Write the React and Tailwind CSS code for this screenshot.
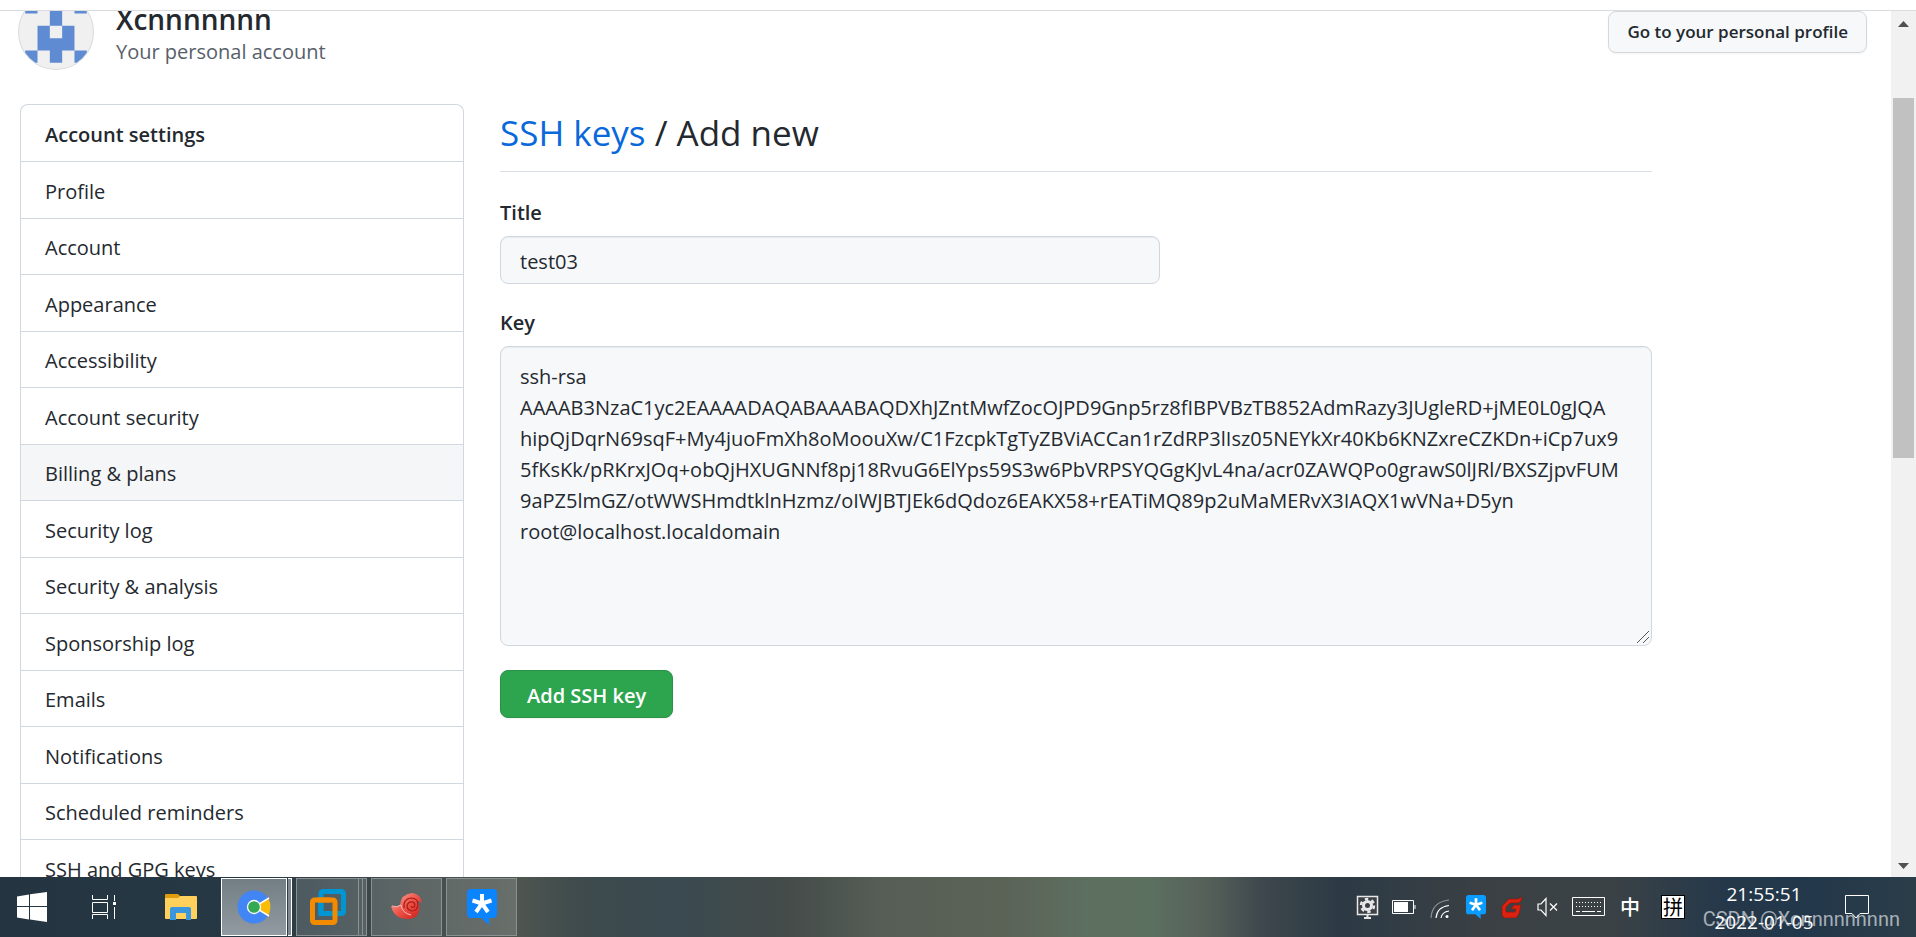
import React, { useState } from "react";

const menuItems = [
  "Profile",
  "Account",
  "Appearance",
  "Accessibility",
  "Account security",
  "Billing & plans",
  "Security log",
  "Security & analysis",
  "Sponsorship log",
  "Emails",
  "Notifications",
  "Scheduled reminders",
  "SSH and GPG keys",
];

const defaultKey = [
  "ssh-rsa",
  "AAAAB3NzaC1yc2EAAAADAQABAAABAQDXhJZntMwfZocOJPD9Gnp5rz8fIBPVBzTB852AdmRazy3JUgleRD+jME0L0gJQA",
  "hipQjDqrN69sqF+My4juoFmXh8oMoouXw/C1FzcpkTgTyZBViACCan1rZdRP3lIsz05NEYkXr40Kb6KNZxreCZKDn+iCp7ux9",
  "5fKsKk/pRKrxJOq+obQjHXUGNNf8pj18RvuG6ElYps59S3w6PbVRPSYQGgKJvL4na/acr0ZAWQPo0grawS0lJRl/BXSZjpvFUM",
  "9aPZ5lmGZ/otWWSHmdtklnHzmz/oIWJBTJEk6dQdoz6EAKX58+rEATiMQ89p2uMaMERvX3IAQX1wVNa+D5yn",
  "root@localhost.localdomain",
].join("\n");

function Avatar() {
  return (
    <svg className="h-[76px] w-[76px] shrink-0" viewBox="0 0 74 74" aria-label="Avatar">
      <clipPath id="avatar">
        <circle cx="37" cy="37" r="36" />
      </clipPath>
      <circle cx="37" cy="37" r="36.5" fill="#f0f0f0" stroke="#d9dbdd" />
      <path
        clipPath="url(#avatar)"
        fill="#5f8bd3"
        d="M7 7h12v12H7zM31 7h12v24H31zM55 7h12v12H55zM19 31h12v12h12V31h12v24H43v12H31V55H19zM7 55h12v12H7zM55 55h12v12H55z"
      />
    </svg>
  );
}

function Header() {
  return (
    <header className="-mt-[17px] flex items-center pr-6 pl-[18px]">
      <Avatar />
      <div className="ml-[22px] pt-[3px]">
        <h2 className="text-[28px] leading-9 font-semibold">Xcnnnnnnn</h2>
        <p className="text-xl leading-[30px] text-[#57606a]">Your personal account</p>
      </div>
      <button className="mt-[17px] ml-auto h-[42px] self-start rounded-lg border border-[#d5d8da] bg-[#f6f8fa] px-[18px] text-[17px] font-semibold shadow-xs">
        Go to your personal profile
      </button>
    </header>
  );
}

function Sidebar() {
  return (
    <nav className="w-[444px] shrink-0 rounded-t-lg border border-b-0 border-[#d0d7de] text-xl">
      <h3 className="flex h-[57px] items-center border-b border-[#d0d7de] px-6 pt-[3px] font-semibold">
        Account settings
      </h3>
      <ul>
        {menuItems.map((item) => (
          <li key={item} className="border-b border-[#d0d7de] odd:h-[57px] even:h-14">
            <a
              href="#"
              className={`flex h-full items-center px-6 pt-[3px] ${item === "Billing & plans" ? "bg-[#f5f6f8]" : ""}`}
            >
              {item}
            </a>
          </li>
        ))}
      </ul>
    </nav>
  );
}

function KeyForm() {
  const [title, setTitle] = useState("test03");
  const [key, setKey] = useState(defaultKey);

  return (
    <main className="max-w-[1152px] min-w-0 flex-1">
      <h1 className="border-b border-[#d8dee4] pb-[9px] text-[35px] leading-[58px]">
        <a href="#" className="text-[#0969da]">SSH keys</a> / Add new
      </h1>
      <form onSubmit={(e) => e.preventDefault()}>
        <label htmlFor="title" className="mt-[26px] mb-2 block text-xl leading-[30px] font-semibold">
          Title
        </label>
        <input
          id="title"
          value={title}
          onChange={(e) => setTitle(e.target.value)}
          className="block h-12 w-full max-w-[660px] rounded-lg border border-[#d0d7de] bg-[#f6f8fa] px-[19px] pt-[3px] text-xl shadow-[inset_0_1px_1px_#e8ebee]"
        />
        <label htmlFor="key" className="mt-6 mb-2 block text-xl leading-[30px] font-semibold">
          Key
        </label>
        <div className="relative">
          <textarea
            id="key"
            value={key}
            onChange={(e) => setKey(e.target.value)}
            spellCheck={false}
            className="block h-[300px] w-full resize-none overflow-hidden rounded-lg border border-[#d0d7de] bg-[#f6f8fa] py-[14px] pr-3 pl-[19px] text-xl leading-[31px] whitespace-pre shadow-[inset_0_1px_1px_#e8ebee]"
          />
          <svg className="pointer-events-none absolute right-[3px] bottom-[3px] h-3 w-3" viewBox="0 0 12 12">
            <path d="M0 12L12 0M6 12l6-6" stroke="#555" />
          </svg>
        </div>
        <button className="mt-6 h-12 rounded-lg border border-[#2a9147] bg-[#2da44e] px-[26px] pt-[3px] text-xl font-semibold text-white shadow-xs">
          Add SSH key
        </button>
      </form>
    </main>
  );
}

function Scrollbar() {
  return (
    <div className="flex w-[25px] shrink-0 flex-col items-center bg-[#f1f1f1]">
      <svg className="h-[87px] w-[25px]" viewBox="0 0 25 87">
        <path d="M7 16l5.5-6 5.5 6z" fill="#505050" />
      </svg>
      <div className="h-[360px] w-[21px] bg-[#c1c1c1]" />
      <svg className="mt-auto h-6 w-[25px]" viewBox="0 0 25 24">
        <path d="M7 10h11l-5.500 6z" fill="#505050" />
      </svg>
    </div>
  );
}

function WindowsIcon() {
  return (
    <svg className="h-[30px] w-[30px]" viewBox="0 0 30 30" fill="#fff">
      <path d="M0 4.500L12 2.500V14H0zM13 2.300L30 0v14H13zM0 15h12v12.500L0 25.500zM13 15h17v15l-17-2.400z" />
    </svg>
  );
}

function TaskViewIcon() {
  return (
    <svg className="h-6 w-6" viewBox="0 0 24 24" fill="none" stroke="#fff">
      <path d="M.5 0v4.500h15V0M.5 7.500h15v10H.5zM.5 24v-4.500h15V24M22.500 0v6M22.500 12v12" />
      <path d="M21 7h3v3h-3z" fill="#fff" stroke="none" />
    </svg>
  );
}

function FolderIcon() {
  return (
    <svg className="h-7 w-8" viewBox="0 0 32 28">
      <path d="M0 2q0-1 1-1h12l2 2-2 4H0z" fill="#e19c0b" />
      <path d="M0 5h13l2-2h16q1 0 1 1v21q0 1-1 1H1q-1 0-1-1z" fill="#ffd15c" />
      <path d="M5 16q0-2 2-2h17q2 0 2 2v11h-5v-7H11v7H5z" fill="#3b97dd" />
    </svg>
  );
}

function ChromiumIcon() {
  return (
    <svg className="h-[34px] w-[34px]" viewBox="0 0 34 34">
      <circle cx="17" cy="17" r="16.500" fill="#4285f4" />
      <path d="M17 17L31.500 8.500Q35.500 17 31.500 25.500z" fill="#fbbc05" />
      <path d="M32 8L17 17l15 9" fill="none" stroke="#fff" strokeWidth="1.500" />
      <circle cx="17" cy="17" r="6.500" fill="#34a853" stroke="#fff" strokeWidth="1.300" />
    </svg>
  );
}

function VmwareIcon() {
  return (
    <svg className="h-9 w-9" viewBox="0 0 36 36" fill="none" strokeWidth="5">
      <rect x="11" y="2.500" width="22.500" height="22" rx="2" stroke="#0095d3" />
      <rect x="2.500" y="11" width="22.500" height="22.500" rx="2" stroke="#f38b00" />
      <path d="M11 15v9.500h6" stroke="#0095d3" />
      <path d="M8 11h12" stroke="#f38b00" />
    </svg>
  );
}

function ShellIcon() {
  return (
    <svg className="h-[30px] w-[34px]" viewBox="0 0 34 30">
      <defs>
        <linearGradient id="shell" x1="0" y1="0" x2="1" y2="1">
          <stop offset="0" stopColor="#f9b2a8" />
          <stop offset=".5" stopColor="#ee5348" />
          <stop offset="1" stopColor="#c91915" />
        </linearGradient>
      </defs>
      <path
        d="M1 14q5 2 9-1Q11 2 22 1q9 1 10 10-2-2-5-2 3 4 2 10-2 8-11 8Q4 27 1 14z"
        fill="url(#shell)"
      />
      <path
        d="M14 16q-1-9 7-10 7 0 7 7-1 6-6 6-5-1-5-5 1-5 6-4 3 2 1 5-2 1-3-1"
        fill="none"
        stroke="#a91a17"
        strokeWidth="1.200"
      />
      <path d="M2 14q5 2 9-1 1 8 10 10" fill="none" stroke="#f4bab4" />
    </svg>
  );
}

function StarChatIcon({ className, fill }) {
  return (
    <svg className={className} viewBox="0 0 30 36">
      <path d="M4 0h22q4 0 4 4v21q0 4-4 4h-4v7l-8-7H4q-4 0-4-4V4q0-4 4-4z" fill={fill} />
      <path
        d="M15 5v9.500M15 14.500L5.500 11.500M15 14.500l9.500-3M15 14.500L9 23M15 14.500L21 23"
        stroke="#fff"
        strokeWidth="4"
      />
    </svg>
  );
}

function MonitorIcon() {
  return (
    <svg className="h-6 w-6" viewBox="0 0 24 24" fill="none" stroke="#e8e8e8">
      <path d="M1.500 1.500h20v18h-20z" strokeWidth="1.500" fill="#3b4145" />
      <path d="M8 23h7M11.500 20v3" strokeWidth="2" />
      <circle cx="11.500" cy="10.500" r="4" strokeWidth="3" />
      <circle cx="11.500" cy="10.500" r="6.500" strokeWidth="2.500" strokeDasharray="3.400 3.400" />
    </svg>
  );
}

function BatteryIcon() {
  return (
    <svg className="h-[14px] w-6" viewBox="0 0 24 14" fill="none" stroke="#fff">
      <path d="M.5.5h21v13H.5zM23 5v4" />
      <path d="M2 2h14v10H2z" fill="#fff" stroke="none" />
    </svg>
  );
}

function WifiIcon() {
  return (
    <svg className="mt-1 h-5 w-5" viewBox="0 0 20 20" fill="none" stroke="#fff" strokeWidth="1.200">
      <path d="M1 19Q2 3 19 1" stroke="#8c9294" />
      <path d="M6 19Q7 8 19 6.500M11 19q1-6 8-7" />
      <circle cx="17" cy="17.500" r="1.500" fill="#fff" stroke="none" />
    </svg>
  );
}

function RedGIcon() {
  return (
    <svg className="h-[22px] w-[22px]" viewBox="0 0 22 22">
      <path
        d="M21 1q0 5-4 6H9l-4 4v5h9l1-3h-5l3-4h7l-2 9-3 4H3l-2-3v-9l7-7h9z"
        fill="#d9220f"
        stroke="#8e1408"
        strokeWidth=".6"
      />
    </svg>
  );
}

function MuteIcon() {
  return (
    <svg className="h-5 w-[22px]" viewBox="0 0 22 20" fill="none" stroke="#fff" strokeWidth="1.200">
      <path d="M1 7h3l5-5.500v17L4 13H1zM13 6.500l7 7M20 6.500l-7 7" />
    </svg>
  );
}

function KeyboardIcon() {
  return (
    <svg className="h-5 w-[34px]" viewBox="0 0 34 20" fill="none" stroke="#fff">
      <path d="M.5.5h32v18H.5z" />
      <path d="M4 5.500h26M4 9.500h26" strokeDasharray="1 2" />
      <path d="M4 14.500h4M10 14.500h13M25 14.500h4" />
    </svg>
  );
}

function NotificationIcon() {
  return (
    <svg className="h-6 w-6" viewBox="0 0 24 24" fill="none" stroke="#fff">
      <path d="M.5.5h23v18h-8.500l-4 4.500-4-4.500H.5z" />
    </svg>
  );
}

const appClass = "flex h-[58px] items-center justify-center border border-[#8b9192] bg-white/15";
const sliverClass = "h-[58px] w-1 border border-l-0 border-[#8b9192] bg-white/15";
const trayClass = "flex w-9 items-center justify-center";

function Taskbar() {
  return (
    <footer className="relative flex h-[60px] shrink-0 items-stretch bg-[linear-gradient(90deg,#243541_0%,#263843_13%,#434d4c_22%,#4f5650_27%,#3f4b4c_30%,#3a4a51_35%,#444b49_41%,#565e56_46%,#5b6256_52%,#5d7060_57%,#5c7060_60%,#56605a_63%,#3d474c_66%,#2c3a45_70%,#3a4044_77%,#3b4246_84%,#25384a_90%,#22374a_94%,#2b3d49_100%)] text-white">
      <button className="flex w-16 items-center justify-center" aria-label="Start"><WindowsIcon /></button>
      <button className="flex w-20 items-center justify-center" aria-label="Task view"><TaskViewIcon /></button>
      <button className="mr-[3px] flex w-[74px] items-center justify-center" aria-label="Explorer"><FolderIcon /></button>

      <div className="flex items-center gap-1">
        <div className="flex gap-px">
          <button
            className="flex h-[58px] w-[66px] items-center justify-center border border-white bg-linear-to-b from-[#727e84] to-[#929aa2]"
            aria-label="Chromium"
          >
            <ChromiumIcon />
          </button>
          <span className="h-[58px] w-1 border border-l-0 border-white bg-[#7d888e]" />
        </div>
        <div className="flex">
          <button className={`${appClass} w-[63px]`} aria-label="VMware"><VmwareIcon /></button>
          <span className={sliverClass} />
          <span className={sliverClass} />
        </div>
        <button className={`${appClass} w-[71px]`} aria-label="Xshell"><ShellIcon /></button>
        <button className={`${appClass} w-[71px]`} aria-label="Chat">
          <StarChatIcon className="h-9 w-[30px]" fill="#0a84ff" />
        </button>
      </div>

      <div className="ml-auto flex pr-8">
        <button className={trayClass} aria-label="Display"><MonitorIcon /></button>
        <button className={trayClass} aria-label="Battery"><BatteryIcon /></button>
        <button className={trayClass} aria-label="Network"><WifiIcon /></button>
        <button className={trayClass} aria-label="Messages">
          <StarChatIcon className="h-6 w-5" fill="#0a9cff" />
        </button>
        <button className={trayClass} aria-label="Tool"><RedGIcon /></button>
        <button className={trayClass} aria-label="Volume"><MuteIcon /></button>
        <button className="flex w-[46px] items-center justify-center" aria-label="Keyboard"><KeyboardIcon /></button>
        <button className="w-9 font-['Noto_Sans_CJK_SC',sans-serif] text-xl font-medium">中</button>
        <button className="flex w-[50px] items-center justify-center font-['Noto_Sans_CJK_SC',sans-serif] text-xl text-black">
          <span className="h-6 w-6 border border-black bg-white text-center leading-[21px]">拼</span>
        </button>
        <div className="w-[132px] pt-[3px] text-center text-[19px] leading-7">
          <time className="block">21:55:51</time>
          <time className="block">2022-01-05</time>
        </div>
        <button className="flex w-[54px] items-center justify-center" aria-label="Notifications"><NotificationIcon /></button>
      </div>

      <span className="pointer-events-none absolute right-4 bottom-1 font-[Roboto,sans-serif] text-xl leading-7 text-white/60">
        CSDN @Xcnnnnnnnnn
      </span>
    </footer>
  );
}

export default function App() {
  return (
    <div className="flex h-screen flex-col overflow-hidden bg-white font-['Open_Sans','Noto_Sans',sans-serif] text-[#24292f]">
      <div className="h-[11px] shrink-0 border-b border-[#dadce0]" />
      <div className="flex min-h-0 flex-1">
        <div className="min-w-0 flex-1 overflow-hidden">
          <Header />
          <div className="mt-[34px] flex gap-9 pl-5">
            <Sidebar />
            <KeyForm />
          </div>
        </div>
        <Scrollbar />
      </div>
      <Taskbar />
    </div>
  );
}
